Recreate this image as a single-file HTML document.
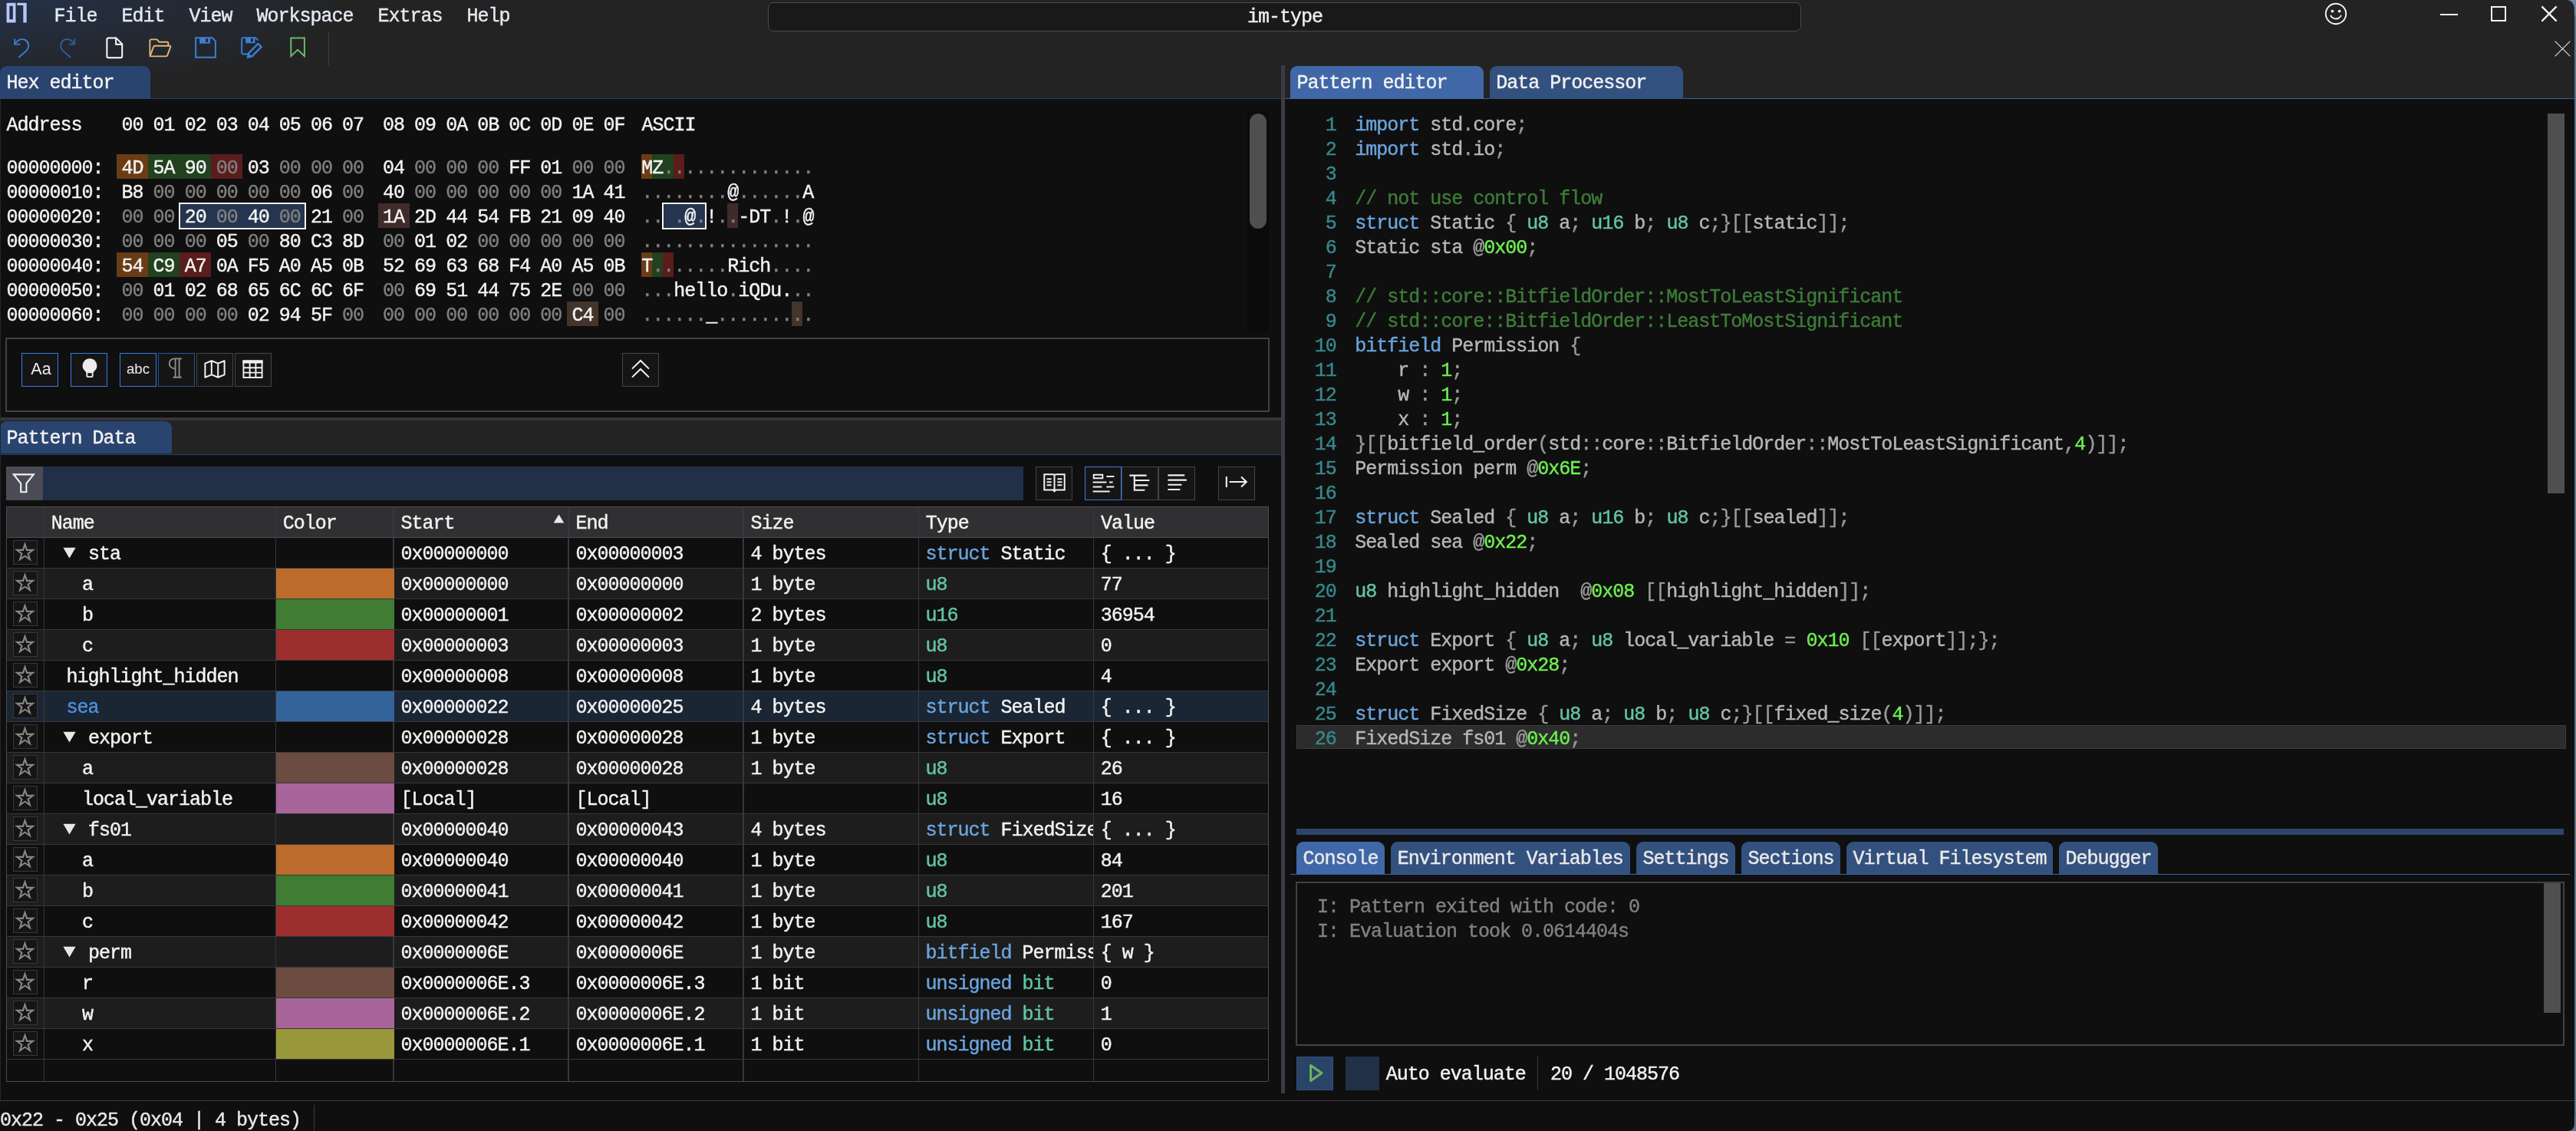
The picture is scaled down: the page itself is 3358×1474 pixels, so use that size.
<!DOCTYPE html>
<html><head><meta charset="utf-8"><title>im-type</title>
<style>
*{box-sizing:border-box;margin:0;padding:0}
html,body{width:3358px;height:1474px;overflow:hidden;background:#0f0f0f;}
body{position:relative;font-family:"Liberation Mono",monospace;font-size:25px;letter-spacing:-1.0024px;color:#f2f2f2;will-change:transform;-webkit-text-stroke:0.42px;}
.b{position:absolute}
.t{position:absolute;white-space:pre;}
.s{position:absolute;white-space:pre;font-family:"Liberation Sans",sans-serif;letter-spacing:0;-webkit-text-stroke:0}
svg{position:absolute;overflow:visible}
.k{color:#6aa4de}.y{color:#63c5a2}.n{color:#6cf050}.c{color:#3d7c38}.i{color:#b6b6b6}.p{color:#9a9a9a}
</style></head>
<body>
<div class="b" style="left:0.00px;top:0.00px;width:3356.00px;height:129.00px;background:#232323;"></div>
<div class="b" style="left:0.00px;top:0.00px;width:900.00px;height:129.00px;background:radial-gradient(ellipse 460px 120px at 0px 0px, rgba(40,92,180,0.25), rgba(40,92,180,0) 100%);"></div>
<div class="t" style="left:70.50px;top:2.40px;line-height:40px;height:40px;color:#e4e8f0;">File</div>
<div class="t" style="left:158.50px;top:2.40px;line-height:40px;height:40px;color:#e4e8f0;">Edit</div>
<div class="t" style="left:246.50px;top:2.40px;line-height:40px;height:40px;color:#e4e8f0;">View</div>
<div class="t" style="left:334.50px;top:2.40px;line-height:40px;height:40px;color:#e4e8f0;">Workspace</div>
<div class="t" style="left:492.50px;top:2.40px;line-height:40px;height:40px;color:#e4e8f0;">Extras</div>
<div class="t" style="left:608.50px;top:2.40px;line-height:40px;height:40px;color:#e4e8f0;">Help</div>
<div class="b" style="left:1000.60px;top:2.60px;width:1347.80px;height:38.60px;background:#191919;border:1.8px solid #4a4a57;border-radius:7px;"></div>
<div class="t" style="left:1626.00px;top:3.40px;line-height:40px;height:40px;color:#eeeeee;">im-type</div>
<div class="b" style="left:0.00px;top:128.20px;width:1670.00px;height:1.00px;background:#23406a;"></div>
<div class="b" style="left:1674.60px;top:128.10px;width:1681.20px;height:1.20px;background:#3865a6;"></div>
<div class="b" style="left:0.00px;top:86.00px;width:196.00px;height:42.50px;background:#2a4470;border-radius:9px 9px 0 0;"></div>
<div class="t" style="left:8.50px;top:92.40px;line-height:34px;height:34px;color:#f2f2f2;">Hex editor</div>
<div class="b" style="left:1682.00px;top:86.00px;width:252.00px;height:42.50px;background:#4068a8;border-radius:9px 9px 0 0;"></div>
<div class="t" style="left:1690.50px;top:92.40px;line-height:34px;height:34px;color:#f2f2f2;">Pattern editor</div>
<div class="b" style="left:1941.70px;top:86.00px;width:252.30px;height:42.50px;background:#33517f;border-radius:9px 9px 0 0;"></div>
<div class="t" style="left:1950.20px;top:92.40px;line-height:34px;height:34px;color:#f2f2f2;">Data Processor</div>
<div class="b" style="left:1670.00px;top:85.00px;width:4.60px;height:1340.00px;background:#3b3b44;"></div>
<div class="b" style="left:0.00px;top:543.60px;width:1670.00px;height:4.20px;background:#35353d;"></div>
<div class="b" style="left:0.00px;top:548.00px;width:1670.00px;height:44.00px;background:#232323;"></div>
<div class="b" style="left:0.00px;top:548.80px;width:224.00px;height:42.70px;background:#2a4470;border-radius:9px 9px 0 0;"></div>
<div class="t" style="left:8.50px;top:555.40px;line-height:34px;height:34px;color:#f2f2f2;">Pattern Data</div>
<div class="b" style="left:0.00px;top:591.50px;width:1670.00px;height:1.00px;background:#23406a;"></div>
<div class="b" style="left:0.00px;top:1433.60px;width:3356.00px;height:1.30px;background:#38383f;"></div>
<div class="t" style="left:0.00px;top:1445.40px;line-height:32px;height:32px;color:#e8e8e8;">0x22 - 0x25 (0x04 | 4 bytes)</div>
<div class="b" style="left:408.50px;top:1440.00px;width:1.30px;height:34.00px;background:#3a3a42;"></div>
<div class="b" style="left:3355.80px;top:0.00px;width:2.20px;height:1474.00px;background:#5f7189;"></div>
<svg style="left:3338.00px;top:0.00px" width="20.00" height="20.00" viewBox="0 0 20 20" ><path d="M20 0H7.800A10 10 0 0 1 17.800 10V20H20z" fill="#6f86a6"/></svg>
<svg style="left:3340.00px;top:1456.00px" width="18.00" height="18.00" viewBox="0 0 18 18" ><path d="M18 18H8A8 8 0 0 0 15.800 10V0H18z" fill="#5f7189"/></svg>
<div class="b" style="left:0.00px;top:129.00px;width:1.20px;height:1305.00px;background:#262628;"></div>
<svg style="left:6.50px;top:1.50px" width="29.50" height="29.00" viewBox="0 0 29.5 29" ><path d="M0.300 0.250h14.300v28.450H0.300z" fill="#1b2c55"/><path d="M14.200 0.250h14.700v28.450h-6.700V6.100h-8z" fill="#1b2c55"/><path d="M1.500 1.700h12v25.800h-12z M5.400 5.700v17.500h4.400V5.700z" fill="#b7c6ea" fill-rule="evenodd"/><path d="M15.400 1.700h12.300v25.800h-4.400V4.900h-7.900z" fill="#b7c6ea"/></svg>
<svg style="left:17.00px;top:48.00px" width="24.00" height="30.00" viewBox="0 0 24 30" ><path d="M2.2 2.4v7.2h7.2" fill="none" stroke="#3b7fd6" stroke-width="1.9"/><path d="M2.6 9.2C5 4.2 11 1.6 16 4.2c5 2.8 5.4 9 2 13.4L7.2 27" fill="none" stroke="#3b7fd6" stroke-width="1.9"/></svg>
<svg style="left:76.00px;top:48.00px" width="24.00" height="30.00" viewBox="0 0 24 30" ><path d="M21.2 2.4v7.2h-7.2" fill="none" stroke="#2e5f9c" stroke-width="1.9"/><path d="M20.8 9.2C18.4 4.2 12.4 1.6 7.4 4.2c-5 2.8-5.4 9-2 13.4L16.2 27" fill="none" stroke="#2e5f9c" stroke-width="1.9"/></svg>
<svg style="left:137.60px;top:47.50px" width="23.60" height="28.60" viewBox="0 0 24 29" ><path d="M3.4 1.4h10.2l8 8v16.2a2 2 0 0 1-2 2H3.4a2 2 0 0 1-2-2V3.4a2 2 0 0 1 2-2z" fill="none" stroke="#ffffff" stroke-width="2"/><path d="M13.4 1.6v8.2h8.2" fill="none" stroke="#ffffff" stroke-width="2"/></svg>
<svg style="left:193.50px;top:49.50px" width="30.00" height="25.00" viewBox="0 0 30 25" ><path d="M1.4 22V3a1.6 1.6 0 0 1 1.6-1.6h7.6l3 3.4h10.2a1.6 1.6 0 0 1 1.6 1.6v3.2" fill="none" stroke="#e2b877" stroke-width="1.9"/><path d="M1.6 23.2l4.6-12.4a1.6 1.6 0 0 1 1.5-1h19.6a1 1 0 0 1 1 1.4l-4.2 11.2a1.6 1.6 0 0 1-1.5 1H2.2z" fill="none" stroke="#e2b877" stroke-width="1.9"/></svg>
<svg style="left:253.70px;top:47.60px" width="28.00" height="28.00" viewBox="0 0 29 29" ><path d="M1.2 1.2h22.2l4.4 4.4v22.2H1.2z" fill="none" stroke="#3b7fd6" stroke-width="2.1"/><path d="M6.4 1.4h14.4v7.6H6.4z M14.6 1.8v5.4h3.2v-5.4z" fill="#3b7fd6" fill-rule="evenodd"/></svg>
<svg style="left:313.70px;top:47.60px" width="28.60" height="27.60" viewBox="0 0 30 29" ><path d="M11 23.6H3.2a2 2 0 0 1-2-2V3.2a2 2 0 0 1 2-2h16.6l3.8 3.6" fill="none" stroke="#3b7fd6" stroke-width="2"/><path d="M6.4 1.4h13v7.2H6.4z M13.6 1.8v5h3v-5z" fill="#3b7fd6" fill-rule="evenodd"/><path d="M23.6 9.4l4.4 4.4L15.2 26.6l-6 1.6 1.6-6z" fill="none" stroke="#3b7fd6" stroke-width="2.5" stroke-linejoin="round"/><path d="M10.6 22.6l4.4 4.2-5.8 1.4z" fill="#3b7fd6"/></svg>
<svg style="left:377.90px;top:47.60px" width="20.40" height="27.60" viewBox="0 0 22 29" ><path d="M1.4 1.2h19v25.6l-9.5-9-9.5 9z" fill="none" stroke="#66b968" stroke-width="2.2" stroke-linejoin="miter"/></svg>
<div class="b" style="left:427.60px;top:41.00px;width:1.20px;height:44.50px;background:#3d3d44;"></div>
<svg style="left:3030.00px;top:2.80px" width="30.00" height="30.00" viewBox="0 0 30 30" ><circle cx="15" cy="15" r="13.2" fill="none" stroke="#f4f4f4" stroke-width="1.9"/><circle cx="10.4" cy="11.6" r="1.9" fill="#f4f4f4"/><circle cx="19.6" cy="11.6" r="1.9" fill="#f4f4f4"/><path d="M8.4 17.6c3 5.2 10.2 5.2 13.2 0" fill="none" stroke="#f4f4f4" stroke-width="1.9" stroke-linecap="round"/></svg>
<div class="b" style="left:3181.00px;top:17.70px;width:22.50px;height:2.10px;background:#f4f4f4;"></div>
<div class="b" style="left:3246.90px;top:7.80px;width:20.20px;height:20.00px;border:2px solid #f4f4f4;"></div>
<svg style="left:3312.00px;top:7.00px" width="22.00" height="22.00" viewBox="0 0 22 22" ><path d="M1.4 1.4l19.2 19.2M20.6 1.4L1.4 20.6" stroke="#f4f4f4" stroke-width="2.3" fill="none"/></svg>
<svg style="left:3329.50px;top:52.50px" width="21.00" height="21.00" viewBox="0 0 21 21" ><path d="M0.6 0.6l19.8 19.8M20.4 0.6L0.6 20.4" stroke="#e6e6e6" stroke-width="1.1" fill="none"/></svg>
<div class="t" style="left:8.50px;top:147.70px;line-height:32px;height:32px;color:#f2f2f2;">Address</div>
<div class="t" style="left:158.50px;top:147.70px;line-height:32px;height:32px;color:#f2f2f2;">00</div>
<div class="t" style="left:199.57px;top:147.70px;line-height:32px;height:32px;color:#f2f2f2;">01</div>
<div class="t" style="left:240.64px;top:147.70px;line-height:32px;height:32px;color:#f2f2f2;">02</div>
<div class="t" style="left:281.71px;top:147.70px;line-height:32px;height:32px;color:#f2f2f2;">03</div>
<div class="t" style="left:322.78px;top:147.70px;line-height:32px;height:32px;color:#f2f2f2;">04</div>
<div class="t" style="left:363.85px;top:147.70px;line-height:32px;height:32px;color:#f2f2f2;">05</div>
<div class="t" style="left:404.92px;top:147.70px;line-height:32px;height:32px;color:#f2f2f2;">06</div>
<div class="t" style="left:445.99px;top:147.70px;line-height:32px;height:32px;color:#f2f2f2;">07</div>
<div class="t" style="left:499.00px;top:147.70px;line-height:32px;height:32px;color:#f2f2f2;">08</div>
<div class="t" style="left:540.07px;top:147.70px;line-height:32px;height:32px;color:#f2f2f2;">09</div>
<div class="t" style="left:581.14px;top:147.70px;line-height:32px;height:32px;color:#f2f2f2;">0A</div>
<div class="t" style="left:622.21px;top:147.70px;line-height:32px;height:32px;color:#f2f2f2;">0B</div>
<div class="t" style="left:663.28px;top:147.70px;line-height:32px;height:32px;color:#f2f2f2;">0C</div>
<div class="t" style="left:704.35px;top:147.70px;line-height:32px;height:32px;color:#f2f2f2;">0D</div>
<div class="t" style="left:745.42px;top:147.70px;line-height:32px;height:32px;color:#f2f2f2;">0E</div>
<div class="t" style="left:786.49px;top:147.70px;line-height:32px;height:32px;color:#f2f2f2;">0F</div>
<div class="t" style="left:836.40px;top:147.70px;line-height:32px;height:32px;color:#f2f2f2;">ASCII</div>
<div class="b" style="left:152.00px;top:201.20px;width:41.07px;height:31.50px;background:#6a3c16;"></div>
<div class="b" style="left:835.80px;top:201.20px;width:14.00px;height:31.50px;background:#6a3c16;"></div>
<div class="b" style="left:193.07px;top:201.20px;width:41.07px;height:31.50px;background:#22411f;"></div>
<div class="b" style="left:849.80px;top:201.20px;width:14.00px;height:31.50px;background:#22411f;"></div>
<div class="b" style="left:234.14px;top:201.20px;width:41.07px;height:31.50px;background:#22411f;"></div>
<div class="b" style="left:863.80px;top:201.20px;width:14.00px;height:31.50px;background:#22411f;"></div>
<div class="b" style="left:275.21px;top:201.20px;width:41.07px;height:31.50px;background:#5b1c1c;"></div>
<div class="b" style="left:877.80px;top:201.20px;width:14.00px;height:31.50px;background:#5b1c1c;"></div>
<div class="t" style="left:8.50px;top:204.10px;line-height:32px;height:32px;color:#f2f2f2;">00000000:</div>
<div class="t" style="left:158.50px;top:204.10px;line-height:32px;height:32px;color:#f2f2f2;">4D</div>
<div class="t" style="left:199.57px;top:204.10px;line-height:32px;height:32px;color:#f2f2f2;">5A</div>
<div class="t" style="left:240.64px;top:204.10px;line-height:32px;height:32px;color:#f2f2f2;">90</div>
<div class="t" style="left:281.71px;top:204.10px;line-height:32px;height:32px;color:#7f7f7f;">00</div>
<div class="t" style="left:322.78px;top:204.10px;line-height:32px;height:32px;color:#f2f2f2;">03</div>
<div class="t" style="left:363.85px;top:204.10px;line-height:32px;height:32px;color:#7f7f7f;">00</div>
<div class="t" style="left:404.92px;top:204.10px;line-height:32px;height:32px;color:#7f7f7f;">00</div>
<div class="t" style="left:445.99px;top:204.10px;line-height:32px;height:32px;color:#7f7f7f;">00</div>
<div class="t" style="left:499.00px;top:204.10px;line-height:32px;height:32px;color:#f2f2f2;">04</div>
<div class="t" style="left:540.07px;top:204.10px;line-height:32px;height:32px;color:#7f7f7f;">00</div>
<div class="t" style="left:581.14px;top:204.10px;line-height:32px;height:32px;color:#7f7f7f;">00</div>
<div class="t" style="left:622.21px;top:204.10px;line-height:32px;height:32px;color:#7f7f7f;">00</div>
<div class="t" style="left:663.28px;top:204.10px;line-height:32px;height:32px;color:#f2f2f2;">FF</div>
<div class="t" style="left:704.35px;top:204.10px;line-height:32px;height:32px;color:#f2f2f2;">01</div>
<div class="t" style="left:745.42px;top:204.10px;line-height:32px;height:32px;color:#7f7f7f;">00</div>
<div class="t" style="left:786.49px;top:204.10px;line-height:32px;height:32px;color:#7f7f7f;">00</div>
<div class="t" style="left:836.20px;top:204.10px;line-height:32px;height:32px;color:#7f7f7f;"><span style="color:#f2f2f2">M</span><span style="color:#f2f2f2">Z</span>..............</div>
<div class="t" style="left:8.50px;top:236.10px;line-height:32px;height:32px;color:#f2f2f2;">00000010:</div>
<div class="t" style="left:158.50px;top:236.10px;line-height:32px;height:32px;color:#f2f2f2;">B8</div>
<div class="t" style="left:199.57px;top:236.10px;line-height:32px;height:32px;color:#7f7f7f;">00</div>
<div class="t" style="left:240.64px;top:236.10px;line-height:32px;height:32px;color:#7f7f7f;">00</div>
<div class="t" style="left:281.71px;top:236.10px;line-height:32px;height:32px;color:#7f7f7f;">00</div>
<div class="t" style="left:322.78px;top:236.10px;line-height:32px;height:32px;color:#7f7f7f;">00</div>
<div class="t" style="left:363.85px;top:236.10px;line-height:32px;height:32px;color:#7f7f7f;">00</div>
<div class="t" style="left:404.92px;top:236.10px;line-height:32px;height:32px;color:#f2f2f2;">06</div>
<div class="t" style="left:445.99px;top:236.10px;line-height:32px;height:32px;color:#7f7f7f;">00</div>
<div class="t" style="left:499.00px;top:236.10px;line-height:32px;height:32px;color:#f2f2f2;">40</div>
<div class="t" style="left:540.07px;top:236.10px;line-height:32px;height:32px;color:#7f7f7f;">00</div>
<div class="t" style="left:581.14px;top:236.10px;line-height:32px;height:32px;color:#7f7f7f;">00</div>
<div class="t" style="left:622.21px;top:236.10px;line-height:32px;height:32px;color:#7f7f7f;">00</div>
<div class="t" style="left:663.28px;top:236.10px;line-height:32px;height:32px;color:#7f7f7f;">00</div>
<div class="t" style="left:704.35px;top:236.10px;line-height:32px;height:32px;color:#7f7f7f;">00</div>
<div class="t" style="left:745.42px;top:236.10px;line-height:32px;height:32px;color:#f2f2f2;">1A</div>
<div class="t" style="left:786.49px;top:236.10px;line-height:32px;height:32px;color:#f2f2f2;">41</div>
<div class="t" style="left:836.20px;top:236.10px;line-height:32px;height:32px;color:#7f7f7f;">........<span style="color:#f2f2f2">@</span>......<span style="color:#f2f2f2">A</span></div>
<div class="b" style="left:492.50px;top:265.20px;width:41.07px;height:31.50px;background:#3f2c29;"></div>
<div class="b" style="left:947.80px;top:265.20px;width:14.00px;height:31.50px;background:#3f2c29;"></div>
<div class="b" style="left:233.14px;top:264.40px;width:166.28px;height:34.20px;background:#25344f;border:2.1px solid #f4f4f4;"></div>
<div class="b" style="left:862.80px;top:264.40px;width:58.20px;height:34.20px;background:#25344f;border:2.1px solid #f4f4f4;"></div>
<div class="t" style="left:8.50px;top:268.10px;line-height:32px;height:32px;color:#f2f2f2;">00000020:</div>
<div class="t" style="left:158.50px;top:268.10px;line-height:32px;height:32px;color:#7f7f7f;">00</div>
<div class="t" style="left:199.57px;top:268.10px;line-height:32px;height:32px;color:#7f7f7f;">00</div>
<div class="t" style="left:240.64px;top:268.10px;line-height:32px;height:32px;color:#f2f2f2;">20</div>
<div class="t" style="left:281.71px;top:268.10px;line-height:32px;height:32px;color:#7f7f7f;">00</div>
<div class="t" style="left:322.78px;top:268.10px;line-height:32px;height:32px;color:#f2f2f2;">40</div>
<div class="t" style="left:363.85px;top:268.10px;line-height:32px;height:32px;color:#7f7f7f;">00</div>
<div class="t" style="left:404.92px;top:268.10px;line-height:32px;height:32px;color:#f2f2f2;">21</div>
<div class="t" style="left:445.99px;top:268.10px;line-height:32px;height:32px;color:#7f7f7f;">00</div>
<div class="t" style="left:499.00px;top:268.10px;line-height:32px;height:32px;color:#f2f2f2;">1A</div>
<div class="t" style="left:540.07px;top:268.10px;line-height:32px;height:32px;color:#f2f2f2;">2D</div>
<div class="t" style="left:581.14px;top:268.10px;line-height:32px;height:32px;color:#f2f2f2;">44</div>
<div class="t" style="left:622.21px;top:268.10px;line-height:32px;height:32px;color:#f2f2f2;">54</div>
<div class="t" style="left:663.28px;top:268.10px;line-height:32px;height:32px;color:#f2f2f2;">FB</div>
<div class="t" style="left:704.35px;top:268.10px;line-height:32px;height:32px;color:#f2f2f2;">21</div>
<div class="t" style="left:745.42px;top:268.10px;line-height:32px;height:32px;color:#f2f2f2;">09</div>
<div class="t" style="left:786.49px;top:268.10px;line-height:32px;height:32px;color:#f2f2f2;">40</div>
<div class="t" style="left:836.20px;top:268.10px;line-height:32px;height:32px;color:#7f7f7f;">..<span style="color:#f2f2f2"> </span>.<span style="color:#f2f2f2">@</span>.<span style="color:#f2f2f2">!</span>..<span style="color:#f2f2f2">-</span><span style="color:#f2f2f2">D</span><span style="color:#f2f2f2">T</span>.<span style="color:#f2f2f2">!</span>.<span style="color:#f2f2f2">@</span></div>
<div class="t" style="left:8.50px;top:300.10px;line-height:32px;height:32px;color:#f2f2f2;">00000030:</div>
<div class="t" style="left:158.50px;top:300.10px;line-height:32px;height:32px;color:#7f7f7f;">00</div>
<div class="t" style="left:199.57px;top:300.10px;line-height:32px;height:32px;color:#7f7f7f;">00</div>
<div class="t" style="left:240.64px;top:300.10px;line-height:32px;height:32px;color:#7f7f7f;">00</div>
<div class="t" style="left:281.71px;top:300.10px;line-height:32px;height:32px;color:#f2f2f2;">05</div>
<div class="t" style="left:322.78px;top:300.10px;line-height:32px;height:32px;color:#7f7f7f;">00</div>
<div class="t" style="left:363.85px;top:300.10px;line-height:32px;height:32px;color:#f2f2f2;">80</div>
<div class="t" style="left:404.92px;top:300.10px;line-height:32px;height:32px;color:#f2f2f2;">C3</div>
<div class="t" style="left:445.99px;top:300.10px;line-height:32px;height:32px;color:#f2f2f2;">8D</div>
<div class="t" style="left:499.00px;top:300.10px;line-height:32px;height:32px;color:#7f7f7f;">00</div>
<div class="t" style="left:540.07px;top:300.10px;line-height:32px;height:32px;color:#f2f2f2;">01</div>
<div class="t" style="left:581.14px;top:300.10px;line-height:32px;height:32px;color:#f2f2f2;">02</div>
<div class="t" style="left:622.21px;top:300.10px;line-height:32px;height:32px;color:#7f7f7f;">00</div>
<div class="t" style="left:663.28px;top:300.10px;line-height:32px;height:32px;color:#7f7f7f;">00</div>
<div class="t" style="left:704.35px;top:300.10px;line-height:32px;height:32px;color:#7f7f7f;">00</div>
<div class="t" style="left:745.42px;top:300.10px;line-height:32px;height:32px;color:#7f7f7f;">00</div>
<div class="t" style="left:786.49px;top:300.10px;line-height:32px;height:32px;color:#7f7f7f;">00</div>
<div class="t" style="left:836.20px;top:300.10px;line-height:32px;height:32px;color:#7f7f7f;">................</div>
<div class="b" style="left:152.00px;top:329.20px;width:41.07px;height:31.50px;background:#6a3c16;"></div>
<div class="b" style="left:835.80px;top:329.20px;width:14.00px;height:31.50px;background:#6a3c16;"></div>
<div class="b" style="left:193.07px;top:329.20px;width:41.07px;height:31.50px;background:#22411f;"></div>
<div class="b" style="left:849.80px;top:329.20px;width:14.00px;height:31.50px;background:#22411f;"></div>
<div class="b" style="left:234.14px;top:329.20px;width:41.07px;height:31.50px;background:#5b1c1c;"></div>
<div class="b" style="left:863.80px;top:329.20px;width:14.00px;height:31.50px;background:#5b1c1c;"></div>
<div class="t" style="left:8.50px;top:332.10px;line-height:32px;height:32px;color:#f2f2f2;">00000040:</div>
<div class="t" style="left:158.50px;top:332.10px;line-height:32px;height:32px;color:#f2f2f2;">54</div>
<div class="t" style="left:199.57px;top:332.10px;line-height:32px;height:32px;color:#f2f2f2;">C9</div>
<div class="t" style="left:240.64px;top:332.10px;line-height:32px;height:32px;color:#f2f2f2;">A7</div>
<div class="t" style="left:281.71px;top:332.10px;line-height:32px;height:32px;color:#f2f2f2;">0A</div>
<div class="t" style="left:322.78px;top:332.10px;line-height:32px;height:32px;color:#f2f2f2;">F5</div>
<div class="t" style="left:363.85px;top:332.10px;line-height:32px;height:32px;color:#f2f2f2;">A0</div>
<div class="t" style="left:404.92px;top:332.10px;line-height:32px;height:32px;color:#f2f2f2;">A5</div>
<div class="t" style="left:445.99px;top:332.10px;line-height:32px;height:32px;color:#f2f2f2;">0B</div>
<div class="t" style="left:499.00px;top:332.10px;line-height:32px;height:32px;color:#f2f2f2;">52</div>
<div class="t" style="left:540.07px;top:332.10px;line-height:32px;height:32px;color:#f2f2f2;">69</div>
<div class="t" style="left:581.14px;top:332.10px;line-height:32px;height:32px;color:#f2f2f2;">63</div>
<div class="t" style="left:622.21px;top:332.10px;line-height:32px;height:32px;color:#f2f2f2;">68</div>
<div class="t" style="left:663.28px;top:332.10px;line-height:32px;height:32px;color:#f2f2f2;">F4</div>
<div class="t" style="left:704.35px;top:332.10px;line-height:32px;height:32px;color:#f2f2f2;">A0</div>
<div class="t" style="left:745.42px;top:332.10px;line-height:32px;height:32px;color:#f2f2f2;">A5</div>
<div class="t" style="left:786.49px;top:332.10px;line-height:32px;height:32px;color:#f2f2f2;">0B</div>
<div class="t" style="left:836.20px;top:332.10px;line-height:32px;height:32px;color:#7f7f7f;"><span style="color:#f2f2f2">T</span>.......<span style="color:#f2f2f2">R</span><span style="color:#f2f2f2">i</span><span style="color:#f2f2f2">c</span><span style="color:#f2f2f2">h</span>....</div>
<div class="t" style="left:8.50px;top:364.10px;line-height:32px;height:32px;color:#f2f2f2;">00000050:</div>
<div class="t" style="left:158.50px;top:364.10px;line-height:32px;height:32px;color:#7f7f7f;">00</div>
<div class="t" style="left:199.57px;top:364.10px;line-height:32px;height:32px;color:#f2f2f2;">01</div>
<div class="t" style="left:240.64px;top:364.10px;line-height:32px;height:32px;color:#f2f2f2;">02</div>
<div class="t" style="left:281.71px;top:364.10px;line-height:32px;height:32px;color:#f2f2f2;">68</div>
<div class="t" style="left:322.78px;top:364.10px;line-height:32px;height:32px;color:#f2f2f2;">65</div>
<div class="t" style="left:363.85px;top:364.10px;line-height:32px;height:32px;color:#f2f2f2;">6C</div>
<div class="t" style="left:404.92px;top:364.10px;line-height:32px;height:32px;color:#f2f2f2;">6C</div>
<div class="t" style="left:445.99px;top:364.10px;line-height:32px;height:32px;color:#f2f2f2;">6F</div>
<div class="t" style="left:499.00px;top:364.10px;line-height:32px;height:32px;color:#7f7f7f;">00</div>
<div class="t" style="left:540.07px;top:364.10px;line-height:32px;height:32px;color:#f2f2f2;">69</div>
<div class="t" style="left:581.14px;top:364.10px;line-height:32px;height:32px;color:#f2f2f2;">51</div>
<div class="t" style="left:622.21px;top:364.10px;line-height:32px;height:32px;color:#f2f2f2;">44</div>
<div class="t" style="left:663.28px;top:364.10px;line-height:32px;height:32px;color:#f2f2f2;">75</div>
<div class="t" style="left:704.35px;top:364.10px;line-height:32px;height:32px;color:#f2f2f2;">2E</div>
<div class="t" style="left:745.42px;top:364.10px;line-height:32px;height:32px;color:#7f7f7f;">00</div>
<div class="t" style="left:786.49px;top:364.10px;line-height:32px;height:32px;color:#7f7f7f;">00</div>
<div class="t" style="left:836.20px;top:364.10px;line-height:32px;height:32px;color:#7f7f7f;">...<span style="color:#f2f2f2">h</span><span style="color:#f2f2f2">e</span><span style="color:#f2f2f2">l</span><span style="color:#f2f2f2">l</span><span style="color:#f2f2f2">o</span>.<span style="color:#f2f2f2">i</span><span style="color:#f2f2f2">Q</span><span style="color:#f2f2f2">D</span><span style="color:#f2f2f2">u</span><span style="color:#f2f2f2">.</span>..</div>
<div class="b" style="left:738.92px;top:393.20px;width:41.07px;height:31.50px;background:#43342c;"></div>
<div class="b" style="left:1031.80px;top:393.20px;width:14.00px;height:31.50px;background:#43342c;"></div>
<div class="t" style="left:8.50px;top:396.10px;line-height:32px;height:32px;color:#f2f2f2;">00000060:</div>
<div class="t" style="left:158.50px;top:396.10px;line-height:32px;height:32px;color:#7f7f7f;">00</div>
<div class="t" style="left:199.57px;top:396.10px;line-height:32px;height:32px;color:#7f7f7f;">00</div>
<div class="t" style="left:240.64px;top:396.10px;line-height:32px;height:32px;color:#7f7f7f;">00</div>
<div class="t" style="left:281.71px;top:396.10px;line-height:32px;height:32px;color:#7f7f7f;">00</div>
<div class="t" style="left:322.78px;top:396.10px;line-height:32px;height:32px;color:#f2f2f2;">02</div>
<div class="t" style="left:363.85px;top:396.10px;line-height:32px;height:32px;color:#f2f2f2;">94</div>
<div class="t" style="left:404.92px;top:396.10px;line-height:32px;height:32px;color:#f2f2f2;">5F</div>
<div class="t" style="left:445.99px;top:396.10px;line-height:32px;height:32px;color:#7f7f7f;">00</div>
<div class="t" style="left:499.00px;top:396.10px;line-height:32px;height:32px;color:#7f7f7f;">00</div>
<div class="t" style="left:540.07px;top:396.10px;line-height:32px;height:32px;color:#7f7f7f;">00</div>
<div class="t" style="left:581.14px;top:396.10px;line-height:32px;height:32px;color:#7f7f7f;">00</div>
<div class="t" style="left:622.21px;top:396.10px;line-height:32px;height:32px;color:#7f7f7f;">00</div>
<div class="t" style="left:663.28px;top:396.10px;line-height:32px;height:32px;color:#7f7f7f;">00</div>
<div class="t" style="left:704.35px;top:396.10px;line-height:32px;height:32px;color:#7f7f7f;">00</div>
<div class="t" style="left:745.42px;top:396.10px;line-height:32px;height:32px;color:#f2f2f2;">C4</div>
<div class="t" style="left:786.49px;top:396.10px;line-height:32px;height:32px;color:#7f7f7f;">00</div>
<div class="t" style="left:836.20px;top:396.10px;line-height:32px;height:32px;color:#7f7f7f;">......<span style="color:#f2f2f2">_</span>.........</div>
<div class="b" style="left:1625.60px;top:144.60px;width:28.60px;height:287.40px;background:#0b0b0b;"></div>
<div class="b" style="left:1628.60px;top:148.00px;width:22.40px;height:150.00px;background:#4f4f4f;border-radius:11px;"></div>
<div class="b" style="left:6.50px;top:440.00px;width:1648.80px;height:96.90px;border:2px solid #41414b;"></div>
<div class="b" style="left:28.00px;top:460.00px;width:48.00px;height:43.80px;background:#151515;border:1.2px solid #3a7be0;"></div>
<div class="b" style="left:92.00px;top:460.00px;width:48.00px;height:43.80px;background:#151515;border:1.2px solid #3a7be0;"></div>
<div class="b" style="left:156.00px;top:460.00px;width:48.00px;height:43.80px;background:#151515;border:1.2px solid #3a7be0;"></div>
<div class="b" style="left:206.00px;top:460.00px;width:48.00px;height:43.80px;background:#151515;border:1.2px solid #28539a;"></div>
<div class="b" style="left:256.00px;top:460.00px;width:48.00px;height:43.80px;background:#151515;border:1.2px solid #44444c;"></div>
<div class="b" style="left:305.80px;top:460.00px;width:48.00px;height:43.80px;background:#151515;border:1.2px solid #44444c;"></div>
<div class="b" style="left:811.00px;top:460.00px;width:48.00px;height:43.80px;background:#151515;border:1.2px solid #44444c;"></div>
<div class="s" style="left:40.3px;top:467.2px;font-size:21.5px;line-height:28px;color:#ededed">Aa</div>
<div class="s" style="left:165px;top:466.5px;font-size:18.6px;line-height:28px;color:#ededed">abc</div>
<svg style="left:106.00px;top:466.00px" width="22.00" height="28.00" viewBox="0 0 22 28" ><path d="M11 1.2a9.4 9.4 0 0 1 6.2 16.4c-1 1-1.6 2-1.6 3.2V24a2 2 0 0 1-2 2h-5.2a2 2 0 0 1-2-2v-3.2c0-1.2-.6-2.2-1.6-3.2A9.4 9.4 0 0 1 11 1.200z" fill="#ececec"/><rect x="8.3" y="20.2" width="5.4" height="4" fill="#151515"/></svg>
<svg style="left:219.00px;top:466.00px" width="20.00" height="28.00" viewBox="0 0 20 28" ><path d="M9.6 14.2H8.2a6.4 6.4 0 0 1 0-12.800h9.800M9.600 1.400v24.400M14.600 1.400v24.400M6.600 25.800h11.200" fill="none" stroke="#8c8c8c" stroke-width="1.9"/></svg>
<svg style="left:266.00px;top:469.00px" width="28.00" height="24.00" viewBox="0 0 28 24" ><path d="M1.4 4.600l8.400-3.400 8.400 3.400 8.400-3.400v18.200l-8.400 3.400-8.400-3.400-8.400 3.400z M9.800 1.400v18.200M18.200 4.600v18.200" fill="none" stroke="#f0f0f0" stroke-width="2" stroke-linejoin="round"/></svg>
<svg style="left:315.50px;top:468.50px" width="27.00" height="25.00" viewBox="0 0 27 25" ><path d="M1.400 1.400h24.200v21.600H1.400z M1.400 10.200h24.200M1.400 16.600h24.200M9.600 4v19M17.400 4v19" fill="none" stroke="#f0f0f0" stroke-width="1.900"/><rect x="0.45" y="0.45" width="26.1" height="4.100" fill="#f0f0f0"/></svg>
<svg style="left:822.00px;top:467.00px" width="26.00" height="28.00" viewBox="0 0 26 28" ><path d="M2 13.600l11-10.600 11 10.600M2 24.600l11-10.600 11 10.600" fill="none" stroke="#f0f0f0" stroke-width="2"/></svg>
<div class="b" style="left:8.20px;top:608.00px;width:47.60px;height:43.80px;background:#4a4b55;"></div>
<div class="b" style="left:55.80px;top:608.00px;width:1278.00px;height:43.80px;background:#212f47;"></div>
<svg style="left:15.50px;top:616.50px" width="30.00" height="26.00" viewBox="0 0 30 26" ><path d="M1.800 1.400h26l-9.400 11.600v11.200h-7.200V13z" fill="none" stroke="#f2f2f2" stroke-width="2.1" stroke-linejoin="miter"/></svg>
<div class="b" style="left:1350.00px;top:608.00px;width:48.00px;height:43.80px;background:#151515;border:1.2px solid #44444c;"></div>
<div class="b" style="left:1414.00px;top:608.00px;width:48.00px;height:43.80px;background:#151515;border:1.2px solid #3a7be0;"></div>
<div class="b" style="left:1462.00px;top:608.00px;width:47.80px;height:43.80px;background:#151515;border:1.2px solid #44444c;"></div>
<div class="b" style="left:1509.60px;top:608.00px;width:48.20px;height:43.80px;background:#151515;border:1.2px solid #44444c;"></div>
<div class="b" style="left:1588.00px;top:608.00px;width:48.00px;height:43.80px;background:#151515;border:1.2px solid #44444c;"></div>
<svg style="left:1359.50px;top:616.50px" width="29.00" height="25.00" viewBox="0 0 29 25" ><path d="M1.300 1.300h11.400a1.800 1.800 0 0 1 1.800 1.800 1.800 1.800 0 0 1 1.800-1.800h11.400v20.200H16.300l-1.800 1.800-1.800-1.800H1.300z M14.500 3v18.400" fill="none" stroke="#f0f0f0" stroke-width="2"/><path d="M4.600 7.200h6M4.600 11.200h6M4.600 15.200h6M18.400 7.200h6M18.400 11.200h6M18.400 15.200h6" stroke="#f0f0f0" stroke-width="1.900" fill="none"/></svg>
<svg style="left:1423.50px;top:616.50px" width="29.00" height="26.00" viewBox="0 0 29 26" ><path d="M1.700 1.700h11.600v4.600H1.700z" fill="none" stroke="#f0f0f0" stroke-width="1.900"/><path d="M18.400 4h10M0.600 11.600h17.800M22 11.600h4.600M0.600 17.600h11.800M18.400 17.600h10M0.600 23.400h22" stroke="#f0f0f0" stroke-width="2" fill="none"/></svg>
<svg style="left:1471.50px;top:617.50px" width="27.00" height="23.00" viewBox="0 0 27 23" ><path d="M0.400 1.600h22.200M6.800 1.600v19.200h13.600M6.800 8h19.600M6.800 14.400h17.600" stroke="#f0f0f0" stroke-width="2.100" fill="none"/></svg>
<svg style="left:1521.50px;top:618.00px" width="26.00" height="22.00" viewBox="0 0 26 22" ><path d="M0.400 1.400h21.800M0.400 7.600h24.400M0.400 13.800h18M0.400 20h16" stroke="#f0f0f0" stroke-width="2.100" fill="none"/></svg>
<svg style="left:1597.00px;top:620.00px" width="30.00" height="16.00" viewBox="0 0 30 16" ><path d="M1.800 1v14M5.600 8h22M21 1.400l6.800 6.600-6.800 6.600" stroke="#f0f0f0" stroke-width="2.100" fill="none"/></svg>
<div class="b" style="left:8.20px;top:660.30px;width:1645.00px;height:40.40px;background:#303033;"></div>
<div class="t" style="left:66.80px;top:663.40px;line-height:40px;height:40px;color:#f2f2f2;">Name</div>
<div class="t" style="left:368.80px;top:663.40px;line-height:40px;height:40px;color:#f2f2f2;">Color</div>
<div class="t" style="left:522.60px;top:663.40px;line-height:40px;height:40px;color:#f2f2f2;">Start</div>
<div class="t" style="left:750.60px;top:663.40px;line-height:40px;height:40px;color:#f2f2f2;">End</div>
<div class="t" style="left:978.60px;top:663.40px;line-height:40px;height:40px;color:#f2f2f2;">Size</div>
<div class="t" style="left:1206.80px;top:663.40px;line-height:40px;height:40px;color:#f2f2f2;">Type</div>
<div class="t" style="left:1434.90px;top:663.40px;line-height:40px;height:40px;color:#f2f2f2;">Value</div>
<svg style="left:721.00px;top:669.50px" width="15.00" height="12.00" viewBox="0 0 15 12" ><path d="M7.500 0.600l6.800 10.800H0.700z" fill="#eaeaea"/></svg>
<div class="b" style="left:17.00px;top:704.20px;width:32.00px;height:32.00px;background:#151515;border:1.2px solid #37373c;"></div>
<svg style="left:18.40px;top:705.20px" width="29.00" height="29.00" viewBox="0 0 29 29" ><path d="M14.50 1.00L17.79 10.67L28.01 10.81L19.83 16.93L22.85 26.69L14.50 20.80L6.15 26.69L9.17 16.93L0.99 10.81L11.21 10.67z M14.50 7.80L16.26 12.97L21.73 13.05L17.35 16.33L18.97 21.55L14.50 18.40L10.03 21.55L11.65 16.33L7.27 13.05L12.74 12.97z" fill="#868686" fill-rule="evenodd"/></svg>
<svg style="left:82.00px;top:712.60px" width="17.00" height="15.00" viewBox="0 0 17 15" ><path d="M0.400 0.800h16.200L8.500 14.600z" fill="#e8e8e8"/></svg>
<div class="t" style="left:115.00px;top:703.00px;line-height:40px;height:40px;color:#f2f2f2;">sta</div>
<div class="t" style="left:522.40px;top:703.00px;line-height:40px;height:40px;color:#f2f2f2;">0x00000000</div>
<div class="t" style="left:750.40px;top:703.00px;line-height:40px;height:40px;color:#f2f2f2;">0x00000003</div>
<div class="t" style="left:978.40px;top:703.00px;line-height:40px;height:40px;color:#f2f2f2;">4 bytes</div>
<div class="t" style="left:1206.60px;top:703.00px;line-height:40px;height:40px;color:#f2f2f2;width:218.1px;overflow:hidden;"><span class="k">struct</span> Static</div>
<div class="t" style="left:1434.70px;top:703.00px;line-height:40px;height:40px;color:#f2f2f2;">{ ... }</div>
<div class="b" style="left:8.20px;top:740.60px;width:1645.00px;height:40.00px;background:#1d1d1d;"></div>
<div class="b" style="left:17.00px;top:744.20px;width:32.00px;height:32.00px;background:#151515;border:1.2px solid #37373c;"></div>
<svg style="left:18.40px;top:745.20px" width="29.00" height="29.00" viewBox="0 0 29 29" ><path d="M14.50 1.00L17.79 10.67L28.01 10.81L19.83 16.93L22.85 26.69L14.50 20.80L6.15 26.69L9.17 16.93L0.99 10.81L11.21 10.67z M14.50 7.80L16.26 12.97L21.73 13.05L17.35 16.33L18.97 21.55L14.50 18.40L10.03 21.55L11.65 16.33L7.27 13.05L12.74 12.97z" fill="#868686" fill-rule="evenodd"/></svg>
<div class="t" style="left:107.00px;top:743.00px;line-height:40px;height:40px;color:#f2f2f2;">a</div>
<div class="t" style="left:522.40px;top:743.00px;line-height:40px;height:40px;color:#f2f2f2;">0x00000000</div>
<div class="t" style="left:750.40px;top:743.00px;line-height:40px;height:40px;color:#f2f2f2;">0x00000000</div>
<div class="t" style="left:978.40px;top:743.00px;line-height:40px;height:40px;color:#f2f2f2;">1 byte</div>
<div class="t" style="left:1206.60px;top:743.00px;line-height:40px;height:40px;color:#f2f2f2;width:218.1px;overflow:hidden;"><span class="y">u8</span></div>
<div class="t" style="left:1434.70px;top:743.00px;line-height:40px;height:40px;color:#f2f2f2;">77</div>
<div class="b" style="left:17.00px;top:784.20px;width:32.00px;height:32.00px;background:#151515;border:1.2px solid #37373c;"></div>
<svg style="left:18.40px;top:785.20px" width="29.00" height="29.00" viewBox="0 0 29 29" ><path d="M14.50 1.00L17.79 10.67L28.01 10.81L19.83 16.93L22.85 26.69L14.50 20.80L6.15 26.69L9.17 16.93L0.99 10.81L11.21 10.67z M14.50 7.80L16.26 12.97L21.73 13.05L17.35 16.33L18.97 21.55L14.50 18.40L10.03 21.55L11.65 16.33L7.27 13.05L12.74 12.97z" fill="#868686" fill-rule="evenodd"/></svg>
<div class="t" style="left:107.00px;top:783.00px;line-height:40px;height:40px;color:#f2f2f2;">b</div>
<div class="t" style="left:522.40px;top:783.00px;line-height:40px;height:40px;color:#f2f2f2;">0x00000001</div>
<div class="t" style="left:750.40px;top:783.00px;line-height:40px;height:40px;color:#f2f2f2;">0x00000002</div>
<div class="t" style="left:978.40px;top:783.00px;line-height:40px;height:40px;color:#f2f2f2;">2 bytes</div>
<div class="t" style="left:1206.60px;top:783.00px;line-height:40px;height:40px;color:#f2f2f2;width:218.1px;overflow:hidden;"><span class="y">u16</span></div>
<div class="t" style="left:1434.70px;top:783.00px;line-height:40px;height:40px;color:#f2f2f2;">36954</div>
<div class="b" style="left:8.20px;top:820.60px;width:1645.00px;height:40.00px;background:#1d1d1d;"></div>
<div class="b" style="left:17.00px;top:824.20px;width:32.00px;height:32.00px;background:#151515;border:1.2px solid #37373c;"></div>
<svg style="left:18.40px;top:825.20px" width="29.00" height="29.00" viewBox="0 0 29 29" ><path d="M14.50 1.00L17.79 10.67L28.01 10.81L19.83 16.93L22.85 26.69L14.50 20.80L6.15 26.69L9.17 16.93L0.99 10.81L11.21 10.67z M14.50 7.80L16.26 12.97L21.73 13.05L17.35 16.33L18.97 21.55L14.50 18.40L10.03 21.55L11.65 16.33L7.27 13.05L12.74 12.97z" fill="#868686" fill-rule="evenodd"/></svg>
<div class="t" style="left:107.00px;top:823.00px;line-height:40px;height:40px;color:#f2f2f2;">c</div>
<div class="t" style="left:522.40px;top:823.00px;line-height:40px;height:40px;color:#f2f2f2;">0x00000003</div>
<div class="t" style="left:750.40px;top:823.00px;line-height:40px;height:40px;color:#f2f2f2;">0x00000003</div>
<div class="t" style="left:978.40px;top:823.00px;line-height:40px;height:40px;color:#f2f2f2;">1 byte</div>
<div class="t" style="left:1206.60px;top:823.00px;line-height:40px;height:40px;color:#f2f2f2;width:218.1px;overflow:hidden;"><span class="y">u8</span></div>
<div class="t" style="left:1434.70px;top:823.00px;line-height:40px;height:40px;color:#f2f2f2;">0</div>
<div class="b" style="left:17.00px;top:864.20px;width:32.00px;height:32.00px;background:#151515;border:1.2px solid #37373c;"></div>
<svg style="left:18.40px;top:865.20px" width="29.00" height="29.00" viewBox="0 0 29 29" ><path d="M14.50 1.00L17.79 10.67L28.01 10.81L19.83 16.93L22.85 26.69L14.50 20.80L6.15 26.69L9.17 16.93L0.99 10.81L11.21 10.67z M14.50 7.80L16.26 12.97L21.73 13.05L17.35 16.33L18.97 21.55L14.50 18.40L10.03 21.55L11.65 16.33L7.27 13.05L12.74 12.97z" fill="#868686" fill-rule="evenodd"/></svg>
<div class="t" style="left:86.50px;top:863.00px;line-height:40px;height:40px;color:#f2f2f2;">highlight_hidden</div>
<div class="t" style="left:522.40px;top:863.00px;line-height:40px;height:40px;color:#f2f2f2;">0x00000008</div>
<div class="t" style="left:750.40px;top:863.00px;line-height:40px;height:40px;color:#f2f2f2;">0x00000008</div>
<div class="t" style="left:978.40px;top:863.00px;line-height:40px;height:40px;color:#f2f2f2;">1 byte</div>
<div class="t" style="left:1206.60px;top:863.00px;line-height:40px;height:40px;color:#f2f2f2;width:218.1px;overflow:hidden;"><span class="y">u8</span></div>
<div class="t" style="left:1434.70px;top:863.00px;line-height:40px;height:40px;color:#f2f2f2;">4</div>
<div class="b" style="left:8.20px;top:900.60px;width:1645.00px;height:40.00px;background:#1b2634;"></div>
<div class="b" style="left:17.00px;top:904.20px;width:32.00px;height:32.00px;background:#151515;border:1.2px solid #37373c;"></div>
<svg style="left:18.40px;top:905.20px" width="29.00" height="29.00" viewBox="0 0 29 29" ><path d="M14.50 1.00L17.79 10.67L28.01 10.81L19.83 16.93L22.85 26.69L14.50 20.80L6.15 26.69L9.17 16.93L0.99 10.81L11.21 10.67z M14.50 7.80L16.26 12.97L21.73 13.05L17.35 16.33L18.97 21.55L14.50 18.40L10.03 21.55L11.65 16.33L7.27 13.05L12.74 12.97z" fill="#868686" fill-rule="evenodd"/></svg>
<div class="t" style="left:86.50px;top:903.00px;line-height:40px;height:40px;color:#4d8fdf;">sea</div>
<div class="t" style="left:522.40px;top:903.00px;line-height:40px;height:40px;color:#f2f2f2;">0x00000022</div>
<div class="t" style="left:750.40px;top:903.00px;line-height:40px;height:40px;color:#f2f2f2;">0x00000025</div>
<div class="t" style="left:978.40px;top:903.00px;line-height:40px;height:40px;color:#f2f2f2;">4 bytes</div>
<div class="t" style="left:1206.60px;top:903.00px;line-height:40px;height:40px;color:#f2f2f2;width:218.1px;overflow:hidden;"><span class="k">struct</span> Sealed</div>
<div class="t" style="left:1434.70px;top:903.00px;line-height:40px;height:40px;color:#f2f2f2;">{ ... }</div>
<div class="b" style="left:17.00px;top:944.20px;width:32.00px;height:32.00px;background:#151515;border:1.2px solid #37373c;"></div>
<svg style="left:18.40px;top:945.20px" width="29.00" height="29.00" viewBox="0 0 29 29" ><path d="M14.50 1.00L17.79 10.67L28.01 10.81L19.83 16.93L22.85 26.69L14.50 20.80L6.15 26.69L9.17 16.93L0.99 10.81L11.21 10.67z M14.50 7.80L16.26 12.97L21.73 13.05L17.35 16.33L18.97 21.55L14.50 18.40L10.03 21.55L11.65 16.33L7.27 13.05L12.74 12.97z" fill="#868686" fill-rule="evenodd"/></svg>
<svg style="left:82.00px;top:952.60px" width="17.00" height="15.00" viewBox="0 0 17 15" ><path d="M0.400 0.800h16.200L8.500 14.600z" fill="#e8e8e8"/></svg>
<div class="t" style="left:115.00px;top:943.00px;line-height:40px;height:40px;color:#f2f2f2;">export</div>
<div class="t" style="left:522.40px;top:943.00px;line-height:40px;height:40px;color:#f2f2f2;">0x00000028</div>
<div class="t" style="left:750.40px;top:943.00px;line-height:40px;height:40px;color:#f2f2f2;">0x00000028</div>
<div class="t" style="left:978.40px;top:943.00px;line-height:40px;height:40px;color:#f2f2f2;">1 byte</div>
<div class="t" style="left:1206.60px;top:943.00px;line-height:40px;height:40px;color:#f2f2f2;width:218.1px;overflow:hidden;"><span class="k">struct</span> Export</div>
<div class="t" style="left:1434.70px;top:943.00px;line-height:40px;height:40px;color:#f2f2f2;">{ ... }</div>
<div class="b" style="left:8.20px;top:980.60px;width:1645.00px;height:40.00px;background:#1d1d1d;"></div>
<div class="b" style="left:17.00px;top:984.20px;width:32.00px;height:32.00px;background:#151515;border:1.2px solid #37373c;"></div>
<svg style="left:18.40px;top:985.20px" width="29.00" height="29.00" viewBox="0 0 29 29" ><path d="M14.50 1.00L17.79 10.67L28.01 10.81L19.83 16.93L22.85 26.69L14.50 20.80L6.15 26.69L9.17 16.93L0.99 10.81L11.21 10.67z M14.50 7.80L16.26 12.97L21.73 13.05L17.35 16.33L18.97 21.55L14.50 18.40L10.03 21.55L11.65 16.33L7.27 13.05L12.74 12.97z" fill="#868686" fill-rule="evenodd"/></svg>
<div class="t" style="left:107.00px;top:983.00px;line-height:40px;height:40px;color:#f2f2f2;">a</div>
<div class="t" style="left:522.40px;top:983.00px;line-height:40px;height:40px;color:#f2f2f2;">0x00000028</div>
<div class="t" style="left:750.40px;top:983.00px;line-height:40px;height:40px;color:#f2f2f2;">0x00000028</div>
<div class="t" style="left:978.40px;top:983.00px;line-height:40px;height:40px;color:#f2f2f2;">1 byte</div>
<div class="t" style="left:1206.60px;top:983.00px;line-height:40px;height:40px;color:#f2f2f2;width:218.1px;overflow:hidden;"><span class="y">u8</span></div>
<div class="t" style="left:1434.70px;top:983.00px;line-height:40px;height:40px;color:#f2f2f2;">26</div>
<div class="b" style="left:17.00px;top:1024.20px;width:32.00px;height:32.00px;background:#151515;border:1.2px solid #37373c;"></div>
<svg style="left:18.40px;top:1025.20px" width="29.00" height="29.00" viewBox="0 0 29 29" ><path d="M14.50 1.00L17.79 10.67L28.01 10.81L19.83 16.93L22.85 26.69L14.50 20.80L6.15 26.69L9.17 16.93L0.99 10.81L11.21 10.67z M14.50 7.80L16.26 12.97L21.73 13.05L17.35 16.33L18.97 21.55L14.50 18.40L10.03 21.55L11.65 16.33L7.27 13.05L12.74 12.97z" fill="#868686" fill-rule="evenodd"/></svg>
<div class="t" style="left:107.00px;top:1023.00px;line-height:40px;height:40px;color:#f2f2f2;">local_variable</div>
<div class="t" style="left:522.40px;top:1023.00px;line-height:40px;height:40px;color:#f2f2f2;">[Local]</div>
<div class="t" style="left:750.40px;top:1023.00px;line-height:40px;height:40px;color:#f2f2f2;">[Local]</div>
<div class="t" style="left:978.40px;top:1023.00px;line-height:40px;height:40px;color:#f2f2f2;"></div>
<div class="t" style="left:1206.60px;top:1023.00px;line-height:40px;height:40px;color:#f2f2f2;width:218.1px;overflow:hidden;"><span class="y">u8</span></div>
<div class="t" style="left:1434.70px;top:1023.00px;line-height:40px;height:40px;color:#f2f2f2;">16</div>
<div class="b" style="left:8.20px;top:1060.60px;width:1645.00px;height:40.00px;background:#1d1d1d;"></div>
<div class="b" style="left:17.00px;top:1064.20px;width:32.00px;height:32.00px;background:#151515;border:1.2px solid #37373c;"></div>
<svg style="left:18.40px;top:1065.20px" width="29.00" height="29.00" viewBox="0 0 29 29" ><path d="M14.50 1.00L17.79 10.67L28.01 10.81L19.83 16.93L22.85 26.69L14.50 20.80L6.15 26.69L9.17 16.93L0.99 10.81L11.21 10.67z M14.50 7.80L16.26 12.97L21.73 13.05L17.35 16.33L18.97 21.55L14.50 18.40L10.03 21.55L11.65 16.33L7.27 13.05L12.74 12.97z" fill="#868686" fill-rule="evenodd"/></svg>
<svg style="left:82.00px;top:1072.60px" width="17.00" height="15.00" viewBox="0 0 17 15" ><path d="M0.400 0.800h16.200L8.500 14.600z" fill="#e8e8e8"/></svg>
<div class="t" style="left:115.00px;top:1063.00px;line-height:40px;height:40px;color:#f2f2f2;">fs01</div>
<div class="t" style="left:522.40px;top:1063.00px;line-height:40px;height:40px;color:#f2f2f2;">0x00000040</div>
<div class="t" style="left:750.40px;top:1063.00px;line-height:40px;height:40px;color:#f2f2f2;">0x00000043</div>
<div class="t" style="left:978.40px;top:1063.00px;line-height:40px;height:40px;color:#f2f2f2;">4 bytes</div>
<div class="t" style="left:1206.60px;top:1063.00px;line-height:40px;height:40px;color:#f2f2f2;width:218.1px;overflow:hidden;"><span class="k">struct</span> FixedSize</div>
<div class="t" style="left:1434.70px;top:1063.00px;line-height:40px;height:40px;color:#f2f2f2;">{ ... }</div>
<div class="b" style="left:17.00px;top:1104.20px;width:32.00px;height:32.00px;background:#151515;border:1.2px solid #37373c;"></div>
<svg style="left:18.40px;top:1105.20px" width="29.00" height="29.00" viewBox="0 0 29 29" ><path d="M14.50 1.00L17.79 10.67L28.01 10.81L19.83 16.93L22.85 26.69L14.50 20.80L6.15 26.69L9.17 16.93L0.99 10.81L11.21 10.67z M14.50 7.80L16.26 12.97L21.73 13.05L17.35 16.33L18.97 21.55L14.50 18.40L10.03 21.55L11.65 16.33L7.27 13.05L12.74 12.97z" fill="#868686" fill-rule="evenodd"/></svg>
<div class="t" style="left:107.00px;top:1103.00px;line-height:40px;height:40px;color:#f2f2f2;">a</div>
<div class="t" style="left:522.40px;top:1103.00px;line-height:40px;height:40px;color:#f2f2f2;">0x00000040</div>
<div class="t" style="left:750.40px;top:1103.00px;line-height:40px;height:40px;color:#f2f2f2;">0x00000040</div>
<div class="t" style="left:978.40px;top:1103.00px;line-height:40px;height:40px;color:#f2f2f2;">1 byte</div>
<div class="t" style="left:1206.60px;top:1103.00px;line-height:40px;height:40px;color:#f2f2f2;width:218.1px;overflow:hidden;"><span class="y">u8</span></div>
<div class="t" style="left:1434.70px;top:1103.00px;line-height:40px;height:40px;color:#f2f2f2;">84</div>
<div class="b" style="left:8.20px;top:1140.60px;width:1645.00px;height:40.00px;background:#1d1d1d;"></div>
<div class="b" style="left:17.00px;top:1144.20px;width:32.00px;height:32.00px;background:#151515;border:1.2px solid #37373c;"></div>
<svg style="left:18.40px;top:1145.20px" width="29.00" height="29.00" viewBox="0 0 29 29" ><path d="M14.50 1.00L17.79 10.67L28.01 10.81L19.83 16.93L22.85 26.69L14.50 20.80L6.15 26.69L9.17 16.93L0.99 10.81L11.21 10.67z M14.50 7.80L16.26 12.97L21.73 13.05L17.35 16.33L18.97 21.55L14.50 18.40L10.03 21.55L11.65 16.33L7.27 13.05L12.74 12.97z" fill="#868686" fill-rule="evenodd"/></svg>
<div class="t" style="left:107.00px;top:1143.00px;line-height:40px;height:40px;color:#f2f2f2;">b</div>
<div class="t" style="left:522.40px;top:1143.00px;line-height:40px;height:40px;color:#f2f2f2;">0x00000041</div>
<div class="t" style="left:750.40px;top:1143.00px;line-height:40px;height:40px;color:#f2f2f2;">0x00000041</div>
<div class="t" style="left:978.40px;top:1143.00px;line-height:40px;height:40px;color:#f2f2f2;">1 byte</div>
<div class="t" style="left:1206.60px;top:1143.00px;line-height:40px;height:40px;color:#f2f2f2;width:218.1px;overflow:hidden;"><span class="y">u8</span></div>
<div class="t" style="left:1434.70px;top:1143.00px;line-height:40px;height:40px;color:#f2f2f2;">201</div>
<div class="b" style="left:17.00px;top:1184.20px;width:32.00px;height:32.00px;background:#151515;border:1.2px solid #37373c;"></div>
<svg style="left:18.40px;top:1185.20px" width="29.00" height="29.00" viewBox="0 0 29 29" ><path d="M14.50 1.00L17.79 10.67L28.01 10.81L19.83 16.93L22.85 26.69L14.50 20.80L6.15 26.69L9.17 16.93L0.99 10.81L11.21 10.67z M14.50 7.80L16.26 12.97L21.73 13.05L17.35 16.33L18.97 21.55L14.50 18.40L10.03 21.55L11.65 16.33L7.27 13.05L12.74 12.97z" fill="#868686" fill-rule="evenodd"/></svg>
<div class="t" style="left:107.00px;top:1183.00px;line-height:40px;height:40px;color:#f2f2f2;">c</div>
<div class="t" style="left:522.40px;top:1183.00px;line-height:40px;height:40px;color:#f2f2f2;">0x00000042</div>
<div class="t" style="left:750.40px;top:1183.00px;line-height:40px;height:40px;color:#f2f2f2;">0x00000042</div>
<div class="t" style="left:978.40px;top:1183.00px;line-height:40px;height:40px;color:#f2f2f2;">1 byte</div>
<div class="t" style="left:1206.60px;top:1183.00px;line-height:40px;height:40px;color:#f2f2f2;width:218.1px;overflow:hidden;"><span class="y">u8</span></div>
<div class="t" style="left:1434.70px;top:1183.00px;line-height:40px;height:40px;color:#f2f2f2;">167</div>
<div class="b" style="left:8.20px;top:1220.60px;width:1645.00px;height:40.00px;background:#1d1d1d;"></div>
<div class="b" style="left:17.00px;top:1224.20px;width:32.00px;height:32.00px;background:#151515;border:1.2px solid #37373c;"></div>
<svg style="left:18.40px;top:1225.20px" width="29.00" height="29.00" viewBox="0 0 29 29" ><path d="M14.50 1.00L17.79 10.67L28.01 10.81L19.83 16.93L22.85 26.69L14.50 20.80L6.15 26.69L9.17 16.93L0.99 10.81L11.21 10.67z M14.50 7.80L16.26 12.97L21.73 13.05L17.35 16.33L18.97 21.55L14.50 18.40L10.03 21.55L11.65 16.33L7.27 13.05L12.74 12.97z" fill="#868686" fill-rule="evenodd"/></svg>
<svg style="left:82.00px;top:1232.60px" width="17.00" height="15.00" viewBox="0 0 17 15" ><path d="M0.400 0.800h16.200L8.500 14.600z" fill="#e8e8e8"/></svg>
<div class="t" style="left:115.00px;top:1223.00px;line-height:40px;height:40px;color:#f2f2f2;">perm</div>
<div class="t" style="left:522.40px;top:1223.00px;line-height:40px;height:40px;color:#f2f2f2;">0x0000006E</div>
<div class="t" style="left:750.40px;top:1223.00px;line-height:40px;height:40px;color:#f2f2f2;">0x0000006E</div>
<div class="t" style="left:978.40px;top:1223.00px;line-height:40px;height:40px;color:#f2f2f2;">1 byte</div>
<div class="t" style="left:1206.60px;top:1223.00px;line-height:40px;height:40px;color:#f2f2f2;width:218.1px;overflow:hidden;"><span class="k">bitfield</span> Permission</div>
<div class="t" style="left:1434.70px;top:1223.00px;line-height:40px;height:40px;color:#f2f2f2;">{ w }</div>
<div class="b" style="left:17.00px;top:1264.20px;width:32.00px;height:32.00px;background:#151515;border:1.2px solid #37373c;"></div>
<svg style="left:18.40px;top:1265.20px" width="29.00" height="29.00" viewBox="0 0 29 29" ><path d="M14.50 1.00L17.79 10.67L28.01 10.81L19.83 16.93L22.85 26.69L14.50 20.80L6.15 26.69L9.17 16.93L0.99 10.81L11.21 10.67z M14.50 7.80L16.26 12.97L21.73 13.05L17.35 16.33L18.97 21.55L14.50 18.40L10.03 21.55L11.65 16.33L7.27 13.05L12.74 12.97z" fill="#868686" fill-rule="evenodd"/></svg>
<div class="t" style="left:107.00px;top:1263.00px;line-height:40px;height:40px;color:#f2f2f2;">r</div>
<div class="t" style="left:522.40px;top:1263.00px;line-height:40px;height:40px;color:#f2f2f2;">0x0000006E.3</div>
<div class="t" style="left:750.40px;top:1263.00px;line-height:40px;height:40px;color:#f2f2f2;">0x0000006E.3</div>
<div class="t" style="left:978.40px;top:1263.00px;line-height:40px;height:40px;color:#f2f2f2;">1 bit</div>
<div class="t" style="left:1206.60px;top:1263.00px;line-height:40px;height:40px;color:#f2f2f2;width:218.1px;overflow:hidden;"><span class="k">unsigned</span><span class="y"> bit</span></div>
<div class="t" style="left:1434.70px;top:1263.00px;line-height:40px;height:40px;color:#f2f2f2;">0</div>
<div class="b" style="left:8.20px;top:1300.60px;width:1645.00px;height:40.00px;background:#1d1d1d;"></div>
<div class="b" style="left:17.00px;top:1304.20px;width:32.00px;height:32.00px;background:#151515;border:1.2px solid #37373c;"></div>
<svg style="left:18.40px;top:1305.20px" width="29.00" height="29.00" viewBox="0 0 29 29" ><path d="M14.50 1.00L17.79 10.67L28.01 10.81L19.83 16.93L22.85 26.69L14.50 20.80L6.15 26.69L9.17 16.93L0.99 10.81L11.21 10.67z M14.50 7.80L16.26 12.97L21.73 13.05L17.35 16.33L18.97 21.55L14.50 18.40L10.03 21.55L11.65 16.33L7.27 13.05L12.74 12.97z" fill="#868686" fill-rule="evenodd"/></svg>
<div class="t" style="left:107.00px;top:1303.00px;line-height:40px;height:40px;color:#f2f2f2;">w</div>
<div class="t" style="left:522.40px;top:1303.00px;line-height:40px;height:40px;color:#f2f2f2;">0x0000006E.2</div>
<div class="t" style="left:750.40px;top:1303.00px;line-height:40px;height:40px;color:#f2f2f2;">0x0000006E.2</div>
<div class="t" style="left:978.40px;top:1303.00px;line-height:40px;height:40px;color:#f2f2f2;">1 bit</div>
<div class="t" style="left:1206.60px;top:1303.00px;line-height:40px;height:40px;color:#f2f2f2;width:218.1px;overflow:hidden;"><span class="k">unsigned</span><span class="y"> bit</span></div>
<div class="t" style="left:1434.70px;top:1303.00px;line-height:40px;height:40px;color:#f2f2f2;">1</div>
<div class="b" style="left:17.00px;top:1344.20px;width:32.00px;height:32.00px;background:#151515;border:1.2px solid #37373c;"></div>
<svg style="left:18.40px;top:1345.20px" width="29.00" height="29.00" viewBox="0 0 29 29" ><path d="M14.50 1.00L17.79 10.67L28.01 10.81L19.83 16.93L22.85 26.69L14.50 20.80L6.15 26.69L9.17 16.93L0.99 10.81L11.21 10.67z M14.50 7.80L16.26 12.97L21.73 13.05L17.35 16.33L18.97 21.55L14.50 18.40L10.03 21.55L11.65 16.33L7.27 13.05L12.74 12.97z" fill="#868686" fill-rule="evenodd"/></svg>
<div class="t" style="left:107.00px;top:1343.00px;line-height:40px;height:40px;color:#f2f2f2;">x</div>
<div class="t" style="left:522.40px;top:1343.00px;line-height:40px;height:40px;color:#f2f2f2;">0x0000006E.1</div>
<div class="t" style="left:750.40px;top:1343.00px;line-height:40px;height:40px;color:#f2f2f2;">0x0000006E.1</div>
<div class="t" style="left:978.40px;top:1343.00px;line-height:40px;height:40px;color:#f2f2f2;">1 bit</div>
<div class="t" style="left:1206.60px;top:1343.00px;line-height:40px;height:40px;color:#f2f2f2;width:218.1px;overflow:hidden;"><span class="k">unsigned</span><span class="y"> bit</span></div>
<div class="t" style="left:1434.70px;top:1343.00px;line-height:40px;height:40px;color:#f2f2f2;">0</div>
<div class="b" style="left:8.20px;top:700.00px;width:1645.00px;height:1.20px;background:#4b4b55;"></div>
<div class="b" style="left:8.20px;top:740.00px;width:1645.00px;height:1.20px;background:#37373c;"></div>
<div class="b" style="left:8.20px;top:780.00px;width:1645.00px;height:1.20px;background:#37373c;"></div>
<div class="b" style="left:8.20px;top:820.00px;width:1645.00px;height:1.20px;background:#37373c;"></div>
<div class="b" style="left:8.20px;top:860.00px;width:1645.00px;height:1.20px;background:#37373c;"></div>
<div class="b" style="left:8.20px;top:900.00px;width:1645.00px;height:1.20px;background:#37373c;"></div>
<div class="b" style="left:8.20px;top:940.00px;width:1645.00px;height:1.20px;background:#37373c;"></div>
<div class="b" style="left:8.20px;top:980.00px;width:1645.00px;height:1.20px;background:#37373c;"></div>
<div class="b" style="left:8.20px;top:1020.00px;width:1645.00px;height:1.20px;background:#37373c;"></div>
<div class="b" style="left:8.20px;top:1060.00px;width:1645.00px;height:1.20px;background:#37373c;"></div>
<div class="b" style="left:8.20px;top:1100.00px;width:1645.00px;height:1.20px;background:#37373c;"></div>
<div class="b" style="left:8.20px;top:1140.00px;width:1645.00px;height:1.20px;background:#37373c;"></div>
<div class="b" style="left:8.20px;top:1180.00px;width:1645.00px;height:1.20px;background:#37373c;"></div>
<div class="b" style="left:8.20px;top:1220.00px;width:1645.00px;height:1.20px;background:#37373c;"></div>
<div class="b" style="left:8.20px;top:1260.00px;width:1645.00px;height:1.20px;background:#37373c;"></div>
<div class="b" style="left:8.20px;top:1300.00px;width:1645.00px;height:1.20px;background:#37373c;"></div>
<div class="b" style="left:8.20px;top:1340.00px;width:1645.00px;height:1.20px;background:#37373c;"></div>
<div class="b" style="left:8.20px;top:1380.00px;width:1645.00px;height:1.20px;background:#37373c;"></div>
<div class="b" style="left:7.60px;top:660.30px;width:1.30px;height:749.10px;background:#4b4b55;"></div>
<div class="b" style="left:56.60px;top:660.30px;width:1.30px;height:749.10px;background:#37373c;"></div>
<div class="b" style="left:358.60px;top:660.30px;width:1.30px;height:749.10px;background:#37373c;"></div>
<div class="b" style="left:512.40px;top:660.30px;width:1.30px;height:749.10px;background:#37373c;"></div>
<div class="b" style="left:740.40px;top:660.30px;width:1.30px;height:749.10px;background:#37373c;"></div>
<div class="b" style="left:968.40px;top:660.30px;width:1.30px;height:749.10px;background:#37373c;"></div>
<div class="b" style="left:1196.60px;top:660.30px;width:1.30px;height:749.10px;background:#37373c;"></div>
<div class="b" style="left:1424.70px;top:660.30px;width:1.30px;height:749.10px;background:#37373c;"></div>
<div class="b" style="left:1652.60px;top:660.30px;width:1.30px;height:749.10px;background:#4b4b55;"></div>
<div class="b" style="left:359.90px;top:741.20px;width:153.90px;height:38.80px;background:#bb6b2b;"></div>
<div class="b" style="left:359.90px;top:781.20px;width:153.90px;height:38.80px;background:#407c33;"></div>
<div class="b" style="left:359.90px;top:821.20px;width:153.90px;height:38.80px;background:#9c2f2d;"></div>
<div class="b" style="left:359.90px;top:901.20px;width:153.90px;height:38.80px;background:#34639a;"></div>
<div class="b" style="left:359.90px;top:981.20px;width:153.90px;height:38.80px;background:#6c4b41;"></div>
<div class="b" style="left:359.90px;top:1021.20px;width:153.90px;height:38.80px;background:#a8659a;"></div>
<div class="b" style="left:359.90px;top:1101.20px;width:153.90px;height:38.80px;background:#bb6b2b;"></div>
<div class="b" style="left:359.90px;top:1141.20px;width:153.90px;height:38.80px;background:#407c33;"></div>
<div class="b" style="left:359.90px;top:1181.20px;width:153.90px;height:38.80px;background:#9c2f2d;"></div>
<div class="b" style="left:359.90px;top:1261.20px;width:153.90px;height:38.80px;background:#6c4b41;"></div>
<div class="b" style="left:359.90px;top:1301.20px;width:153.90px;height:38.80px;background:#a8659a;"></div>
<div class="b" style="left:359.90px;top:1341.20px;width:153.90px;height:38.80px;background:#98973a;"></div>
<div class="b" style="left:8.20px;top:659.70px;width:1645.00px;height:1.30px;background:#4b4b55;"></div>
<div class="b" style="left:8.20px;top:1408.80px;width:1645.00px;height:1.30px;background:#4b4b55;"></div>
<div class="b" style="left:1690.00px;top:945.20px;width:1655.00px;height:31.20px;background:#2c2c2c;border:1.2px solid #3c3c3c;"></div>
<div class="t" style="left:1727.80px;top:148.00px;line-height:32px;height:32px;color:#37888b;">1</div>
<div class="t" style="left:1766.20px;top:148.00px;line-height:32px;height:32px;color:#b6b6b6;"><span class="k">import</span><span class="i"> std</span><span class="p">.</span><span class="i">core</span><span class="p">;</span></div>
<div class="t" style="left:1727.80px;top:180.00px;line-height:32px;height:32px;color:#37888b;">2</div>
<div class="t" style="left:1766.20px;top:180.00px;line-height:32px;height:32px;color:#b6b6b6;"><span class="k">import</span><span class="i"> std</span><span class="p">.</span><span class="i">io</span><span class="p">;</span></div>
<div class="t" style="left:1727.80px;top:212.00px;line-height:32px;height:32px;color:#37888b;">3</div>
<div class="t" style="left:1727.80px;top:244.00px;line-height:32px;height:32px;color:#37888b;">4</div>
<div class="t" style="left:1766.20px;top:244.00px;line-height:32px;height:32px;color:#b6b6b6;"><span class="c">// not use control flow</span></div>
<div class="t" style="left:1727.80px;top:276.00px;line-height:32px;height:32px;color:#37888b;">5</div>
<div class="t" style="left:1766.20px;top:276.00px;line-height:32px;height:32px;color:#b6b6b6;"><span class="k">struct</span><span class="i"> Static </span><span class="p">{</span> <span class="y">u8</span><span class="i"> a</span><span class="p">;</span> <span class="y">u16</span><span class="i"> b</span><span class="p">;</span> <span class="y">u8</span><span class="i"> c</span><span class="p">;</span><span class="p">}[[</span><span class="i">static</span><span class="p">]];</span></div>
<div class="t" style="left:1727.80px;top:308.00px;line-height:32px;height:32px;color:#37888b;">6</div>
<div class="t" style="left:1766.20px;top:308.00px;line-height:32px;height:32px;color:#b6b6b6;"><span class="i">Static sta </span><span class="p">@</span><span class="n">0x00</span><span class="p">;</span></div>
<div class="t" style="left:1727.80px;top:340.00px;line-height:32px;height:32px;color:#37888b;">7</div>
<div class="t" style="left:1727.80px;top:372.00px;line-height:32px;height:32px;color:#37888b;">8</div>
<div class="t" style="left:1766.20px;top:372.00px;line-height:32px;height:32px;color:#b6b6b6;"><span class="c">// std::core::BitfieldOrder::MostToLeastSignificant</span></div>
<div class="t" style="left:1727.80px;top:404.00px;line-height:32px;height:32px;color:#37888b;">9</div>
<div class="t" style="left:1766.20px;top:404.00px;line-height:32px;height:32px;color:#b6b6b6;"><span class="c">// std::core::BitfieldOrder::LeastToMostSignificant</span></div>
<div class="t" style="left:1713.80px;top:436.00px;line-height:32px;height:32px;color:#37888b;">10</div>
<div class="t" style="left:1766.20px;top:436.00px;line-height:32px;height:32px;color:#b6b6b6;"><span class="k">bitfield</span><span class="i"> Permission </span><span class="p">{</span></div>
<div class="t" style="left:1713.80px;top:468.00px;line-height:32px;height:32px;color:#37888b;">11</div>
<div class="t" style="left:1766.20px;top:468.00px;line-height:32px;height:32px;color:#b6b6b6;"><span class="i">    r </span><span class="p">:</span> <span class="n">1</span><span class="p">;</span></div>
<div class="t" style="left:1713.80px;top:500.00px;line-height:32px;height:32px;color:#37888b;">12</div>
<div class="t" style="left:1766.20px;top:500.00px;line-height:32px;height:32px;color:#b6b6b6;"><span class="i">    w </span><span class="p">:</span> <span class="n">1</span><span class="p">;</span></div>
<div class="t" style="left:1713.80px;top:532.00px;line-height:32px;height:32px;color:#37888b;">13</div>
<div class="t" style="left:1766.20px;top:532.00px;line-height:32px;height:32px;color:#b6b6b6;"><span class="i">    x </span><span class="p">:</span> <span class="n">1</span><span class="p">;</span></div>
<div class="t" style="left:1713.80px;top:564.00px;line-height:32px;height:32px;color:#37888b;">14</div>
<div class="t" style="left:1766.20px;top:564.00px;line-height:32px;height:32px;color:#b6b6b6;"><span class="p">}[[</span><span class="i">bitfield_order</span><span class="p">(</span><span class="i">std</span><span class="p">::</span><span class="i">core</span><span class="p">::</span><span class="i">BitfieldOrder</span><span class="p">::</span><span class="i">MostToLeastSignificant</span><span class="p">,</span><span class="n">4</span><span class="p">)]];</span></div>
<div class="t" style="left:1713.80px;top:596.00px;line-height:32px;height:32px;color:#37888b;">15</div>
<div class="t" style="left:1766.20px;top:596.00px;line-height:32px;height:32px;color:#b6b6b6;"><span class="i">Permission perm </span><span class="p">@</span><span class="n">0x6E</span><span class="p">;</span></div>
<div class="t" style="left:1713.80px;top:628.00px;line-height:32px;height:32px;color:#37888b;">16</div>
<div class="t" style="left:1713.80px;top:660.00px;line-height:32px;height:32px;color:#37888b;">17</div>
<div class="t" style="left:1766.20px;top:660.00px;line-height:32px;height:32px;color:#b6b6b6;"><span class="k">struct</span><span class="i"> Sealed </span><span class="p">{</span> <span class="y">u8</span><span class="i"> a</span><span class="p">;</span> <span class="y">u16</span><span class="i"> b</span><span class="p">;</span> <span class="y">u8</span><span class="i"> c</span><span class="p">;</span><span class="p">}[[</span><span class="i">sealed</span><span class="p">]];</span></div>
<div class="t" style="left:1713.80px;top:692.00px;line-height:32px;height:32px;color:#37888b;">18</div>
<div class="t" style="left:1766.20px;top:692.00px;line-height:32px;height:32px;color:#b6b6b6;"><span class="i">Sealed sea </span><span class="p">@</span><span class="n">0x22</span><span class="p">;</span></div>
<div class="t" style="left:1713.80px;top:724.00px;line-height:32px;height:32px;color:#37888b;">19</div>
<div class="t" style="left:1713.80px;top:756.00px;line-height:32px;height:32px;color:#37888b;">20</div>
<div class="t" style="left:1766.20px;top:756.00px;line-height:32px;height:32px;color:#b6b6b6;"><span class="y">u8</span><span class="i"> highlight_hidden  </span><span class="p">@</span><span class="n">0x08</span> <span class="p">[[</span><span class="i">highlight_hidden</span><span class="p">]];</span></div>
<div class="t" style="left:1713.80px;top:788.00px;line-height:32px;height:32px;color:#37888b;">21</div>
<div class="t" style="left:1713.80px;top:820.00px;line-height:32px;height:32px;color:#37888b;">22</div>
<div class="t" style="left:1766.20px;top:820.00px;line-height:32px;height:32px;color:#b6b6b6;"><span class="k">struct</span><span class="i"> Export </span><span class="p">{</span> <span class="y">u8</span><span class="i"> a</span><span class="p">;</span> <span class="y">u8</span><span class="i"> local_variable </span><span class="p">=</span> <span class="n">0x10</span> <span class="p">[[</span><span class="i">export</span><span class="p">]];};</span></div>
<div class="t" style="left:1713.80px;top:852.00px;line-height:32px;height:32px;color:#37888b;">23</div>
<div class="t" style="left:1766.20px;top:852.00px;line-height:32px;height:32px;color:#b6b6b6;"><span class="i">Export export </span><span class="p">@</span><span class="n">0x28</span><span class="p">;</span></div>
<div class="t" style="left:1713.80px;top:884.00px;line-height:32px;height:32px;color:#37888b;">24</div>
<div class="t" style="left:1713.80px;top:916.00px;line-height:32px;height:32px;color:#37888b;">25</div>
<div class="t" style="left:1766.20px;top:916.00px;line-height:32px;height:32px;color:#b6b6b6;"><span class="k">struct</span><span class="i"> FixedSize </span><span class="p">{</span> <span class="y">u8</span><span class="i"> a</span><span class="p">;</span> <span class="y">u8</span><span class="i"> b</span><span class="p">;</span> <span class="y">u8</span><span class="i"> c</span><span class="p">;</span><span class="p">}[[</span><span class="i">fixed_size</span><span class="p">(</span><span class="n">4</span><span class="p">)</span><span class="p">]];</span></div>
<div class="t" style="left:1713.80px;top:948.00px;line-height:32px;height:32px;color:#37888b;">26</div>
<div class="t" style="left:1766.20px;top:948.00px;line-height:32px;height:32px;color:#b6b6b6;"><span class="i">FixedSize fs01 </span><span class="p">@</span><span class="n">0x40</span><span class="p">;</span></div>
<div class="b" style="left:3320.60px;top:148.00px;width:22.60px;height:495.00px;background:#4f4f4f;"></div>
<div class="b" style="left:1690.00px;top:1080.00px;width:1652.00px;height:8.00px;background:#2d456d;"></div>
<div class="b" style="left:1690.00px;top:1097.20px;width:115.00px;height:42.20px;background:#4068a8;border-radius:9px 9px 0 0;"></div>
<div class="t" style="left:1698.50px;top:1103.40px;line-height:34px;height:34px;color:#eaeaea;">Console</div>
<div class="b" style="left:1813.30px;top:1097.20px;width:311.70px;height:42.20px;background:#33517f;border-radius:9px 9px 0 0;"></div>
<div class="t" style="left:1821.80px;top:1103.40px;line-height:34px;height:34px;color:#eaeaea;">Environment Variables</div>
<div class="b" style="left:2133.00px;top:1097.20px;width:128.70px;height:42.20px;background:#33517f;border-radius:9px 9px 0 0;"></div>
<div class="t" style="left:2141.50px;top:1103.40px;line-height:34px;height:34px;color:#eaeaea;">Settings</div>
<div class="b" style="left:2269.90px;top:1097.20px;width:129.10px;height:42.20px;background:#33517f;border-radius:9px 9px 0 0;"></div>
<div class="t" style="left:2278.40px;top:1103.40px;line-height:34px;height:34px;color:#eaeaea;">Sections</div>
<div class="b" style="left:2407.00px;top:1097.20px;width:269.00px;height:42.20px;background:#33517f;border-radius:9px 9px 0 0;"></div>
<div class="t" style="left:2415.50px;top:1103.40px;line-height:34px;height:34px;color:#eaeaea;">Virtual Filesystem</div>
<div class="b" style="left:2684.00px;top:1097.20px;width:128.70px;height:42.20px;background:#33517f;border-radius:9px 9px 0 0;"></div>
<div class="t" style="left:2692.50px;top:1103.40px;line-height:34px;height:34px;color:#eaeaea;">Debugger</div>
<div class="b" style="left:1682.00px;top:1139.40px;width:1668.00px;height:1.00px;background:#3865a6;"></div>
<div class="b" style="left:1689.20px;top:1148.50px;width:1654.20px;height:214.00px;border:2px solid #41414b;"></div>
<div class="t" style="left:1717.00px;top:1166.90px;line-height:32px;height:32px;color:#808080;">I: Pattern exited with code: 0</div>
<div class="t" style="left:1717.00px;top:1198.90px;line-height:32px;height:32px;color:#808080;">I: Evaluation took 0.0614404s</div>
<div class="b" style="left:3316.00px;top:1151.40px;width:21.80px;height:169.00px;background:#4f4f4f;"></div>
<div class="b" style="left:1690.00px;top:1376.80px;width:47.80px;height:44.00px;background:#2a4368;border:1px solid #34507a;"></div>
<svg style="left:1705.50px;top:1386.30px" width="20.00" height="25.00" viewBox="0 0 20 25" ><path d="M2.600 2.600l14.400 9.900L2.600 22.400z" fill="none" stroke="#6bb45b" stroke-width="3" stroke-linejoin="round"/></svg>
<div class="b" style="left:1754.00px;top:1376.80px;width:43.60px;height:44.00px;background:#212f47;"></div>
<div class="t" style="left:1806.80px;top:1385.40px;line-height:32px;height:32px;color:#f2f2f2;">Auto evaluate</div>
<div class="b" style="left:2003.80px;top:1377.00px;width:1.30px;height:44.00px;background:#3a3a42;"></div>
<div class="t" style="left:2021.00px;top:1385.40px;line-height:32px;height:32px;color:#f2f2f2;">20 / 1048576</div>
</body></html>
